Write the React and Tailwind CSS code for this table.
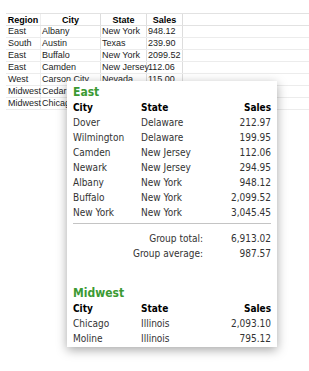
import React from "react";

const bgRows = [
  ["East", "Albany", "New York", "948.12"],
  ["South", "Austin", "Texas", "239.90"],
  ["East", "Buffalo", "New York", "2099.52"],
  ["East", "Camden", "New Jersey", "112.06"],
  ["West", "Carson City", "Nevada", "115.00"],
  ["Midwest", "Cedar", "", ""],
  ["Midwest", "Chicago", "", ""],
];

const east = [
  ["Dover", "Delaware", "212.97"],
  ["Wilmington", "Delaware", "199.95"],
  ["Camden", "New Jersey", "112.06"],
  ["Newark", "New Jersey", "294.95"],
  ["Albany", "New York", "948.12"],
  ["Buffalo", "New York", "2,099.52"],
  ["New York", "New York", "3,045.45"],
];

const midwest = [
  ["Chicago", "Illinois", "2,093.10"],
  ["Moline", "Illinois", "795.12"],
];

const cw = ["w-[35px]", "w-[60px]", "w-[46px]", "w-[36px]"];

function BgTable() {
  return (
    <div className="ml-[6px] pt-[13px] text-[9px] leading-[12px] text-[#1c1c1c]" style={{ fontFamily: '"Liberation Sans", Arial, sans-serif' }}>
      <div className="flex h-[13px] border-t border-b border-[#e2e2e2] font-bold text-black">
        <div className={`${cw[0]} text-center border-r border-[#eeeeee] leading-[12px]`}>Region</div>
        <div className={`${cw[1]} text-center border-r border-[#dddddd] leading-[12px]`}>City</div>
        <div className={`${cw[2]} text-center border-r border-[#dddddd] leading-[12px]`}>State</div>
        <div className={`${cw[3]} text-center border-r border-[#dddddd] leading-[12px]`}>Sales</div>
      </div>
      {bgRows.map((r, i) => (
        <div key={i} className="flex h-[12px] border-b border-[#ececec]">
          <div className={`${cw[0]} pl-[2px] whitespace-nowrap border-r border-[#eeeeee] leading-[11px]`}>{r[0]}</div>
          <div className={`${cw[1]} pl-[1px] whitespace-nowrap border-r border-[#dddddd] leading-[11px]`}>{r[1]}</div>
          <div className={`${cw[2]} pl-[1px] whitespace-nowrap border-r border-[#dddddd] leading-[11px]`}>{r[2]}</div>
          <div className={`${cw[3]} pl-[1px] whitespace-nowrap border-r border-[#dddddd] leading-[11px]`}>{r[3]}</div>
        </div>
      ))}
    </div>
  );
}

function Header() {
  return (
    <div className="flex h-[15px] leading-[15px] font-bold text-black">
      <div className="w-[68px]">City</div>
      <div className="flex-1">State</div>
      <div className="text-right">Sales</div>
    </div>
  );
}

function Row({ r }) {
  return (
    <div className="flex h-[15px] leading-[15px] text-[#333]">
      <div className="w-[68px] whitespace-nowrap">{r[0]}</div>
      <div className="flex-1 whitespace-nowrap">{r[1]}</div>
      <div className="text-right">{r[2]}</div>
    </div>
  );
}

export default function App() {
  return (
    <div className="relative w-[309px] h-[371px] bg-white overflow-hidden">
      <BgTable />
      <div
        className="absolute left-[67px] top-[81px] w-[210px] h-[266px] bg-white px-[6px] pt-[4px] shadow-[0_3px_10px_rgba(0,0,0,0.35)] text-[10px]"
        style={{ fontFamily: '"DejaVu Sans Condensed", "DejaVu Sans", sans-serif', fontStretch: "condensed" }}
      >
        <div className="h-[15px] leading-[15px] text-[12px] font-bold text-[#3b9a33]">East</div>
        <Header />
        {east.map((r, i) => (
          <Row key={i} r={r} />
        ))}
        <div className="mt-[3px] h-px bg-[#c4c4c4]" />
        <div className="flex h-[15px] leading-[15px] mt-[7px] text-[#333]">
          <div className="w-[130px] text-right">Group total:</div>
          <div className="flex-1 text-right">6,913.02</div>
        </div>
        <div className="flex h-[15px] leading-[15px] text-[#333]">
          <div className="w-[130px] text-right">Group average:</div>
          <div className="flex-1 text-right">987.57</div>
        </div>
        <div className="mt-[25px] h-[15px] leading-[15px] text-[12px] font-bold text-[#3b9a33]">Midwest</div>
        <Header />
        {midwest.map((r, i) => (
          <Row key={i} r={r} />
        ))}
      </div>
    </div>
  );
}
